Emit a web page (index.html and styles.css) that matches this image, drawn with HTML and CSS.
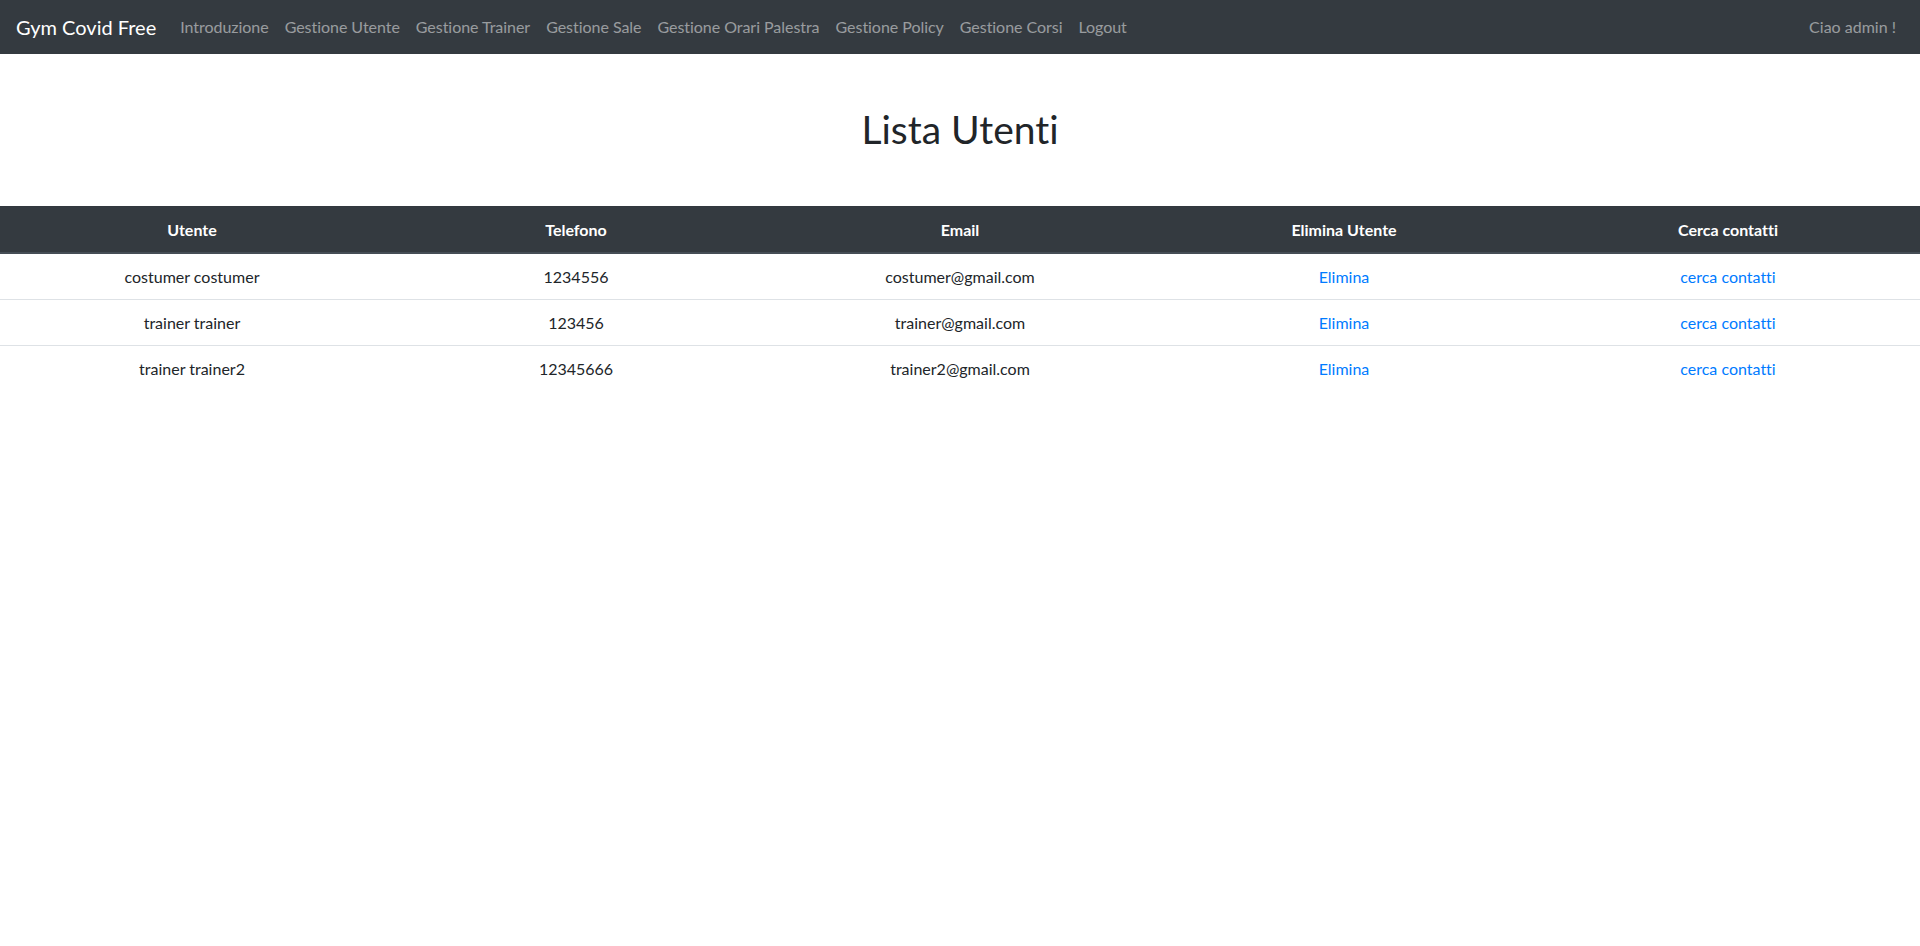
FILE: index.html
```html
<!DOCTYPE html>
<html lang="it">
<head>
<meta charset="utf-8">
<title>Gym Covid Free - Lista Utenti</title>
<link rel="stylesheet" href="styles.css">
</head>
<body>
<nav class="navbar">
  <a class="brand" href="#">Gym Covid Free</a>
  <ul class="nav-links">
    <li><a href="#">Introduzione</a></li>
    <li><a href="#">Gestione Utente</a></li>
    <li><a href="#">Gestione Trainer</a></li>
    <li><a href="#">Gestione Sale</a></li>
    <li><a href="#">Gestione Orari Palestra</a></li>
    <li><a href="#">Gestione Policy</a></li>
    <li><a href="#">Gestione Corsi</a></li>
    <li><a href="#">Logout</a></li>
  </ul>
  <span class="greeting">Ciao admin !</span>
</nav>
<main class="content">
  <h1 class="title">Lista Utenti</h1>
  <table class="users">
    <thead>
      <tr>
        <th>Utente</th>
        <th>Telefono</th>
        <th>Email</th>
        <th>Elimina Utente</th>
        <th>Cerca contatti</th>
      </tr>
    </thead>
    <tbody>
      <tr>
        <td>costumer costumer</td>
        <td>1234556</td>
        <td>costumer@gmail.com</td>
        <td><a href="#">Elimina</a></td>
        <td><a href="#">cerca contatti</a></td>
      </tr>
      <tr>
        <td>trainer trainer</td>
        <td>123456</td>
        <td>trainer@gmail.com</td>
        <td><a href="#">Elimina</a></td>
        <td><a href="#">cerca contatti</a></td>
      </tr>
      <tr>
        <td>trainer trainer2</td>
        <td>12345666</td>
        <td>trainer2@gmail.com</td>
        <td><a href="#">Elimina</a></td>
        <td><a href="#">cerca contatti</a></td>
      </tr>
    </tbody>
  </table>
</main>
</body>
</html>
```

FILE: styles.css
```css
html, body {
  margin: 0;
  padding: 0;
}
body {
  font-family: "Segoe UI", Lato, "Liberation Sans", sans-serif;
  font-size: 16px;
  line-height: 1.5;
  color: #212529;
  background: #fff;
  font-variant-ligatures: none;
  font-feature-settings: "liga" 0, "clig" 0;
}
a {
  text-decoration: none;
}
.navbar {
  display: flex;
  align-items: center;
  height: 54px;
  box-sizing: border-box;
  padding: 0 16px;
  background: #343a40;
}
.brand {
  color: #fff;
  font-size: 20px;
  line-height: 30px;
  margin-right: 16px;
}
.nav-links {
  display: flex;
  list-style: none;
  margin: 0;
  padding: 0;
  flex: 1;
}
.nav-links a {
  display: block;
  padding: 8px;
  color: rgba(255, 255, 255, 0.5);
  letter-spacing: -0.04px;
}
.greeting {
  color: rgba(255, 255, 255, 0.5);
  padding: 8px;
}
.content {
  padding-top: 51px;
}
.title {
  margin: 0 0 53px;
  text-align: center;
  font-size: 39px;
  font-weight: 400;
  line-height: 48px;
}
.users {
  width: 100%;
  border-collapse: collapse;
  table-layout: fixed;
}
.users th,
.users td {
  width: 20%;
  text-align: center;
  padding: 12px;
  line-height: 21px;
}
.users th {
  background: #343a40;
  color: #fff;
  font-weight: 700;
  border-top: 1px solid #32383e;
  border-bottom: 2px solid #454d55;
}
.users td {
  border-top: 1px solid #dee2e6;
}
.users td a {
  color: #007bff;
}
```
